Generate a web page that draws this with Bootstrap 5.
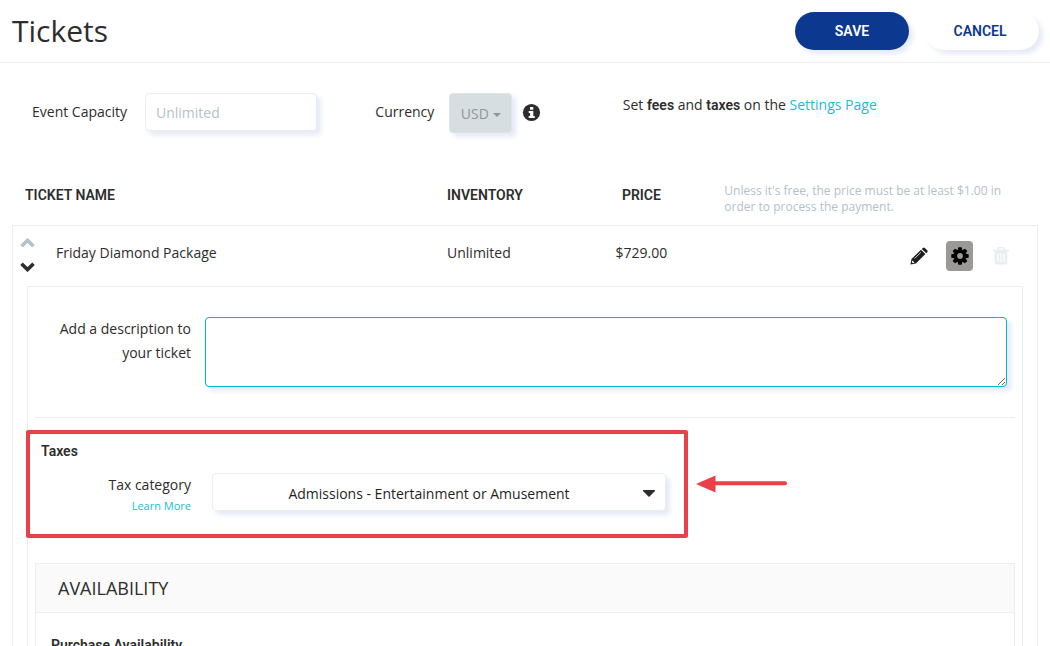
<!DOCTYPE html>
<html lang="en">
<head>
<meta charset="utf-8">
<meta name="viewport" content="width=device-width, initial-scale=1">
<title>Tickets</title>
<link href="https://cdn.jsdelivr.net/npm/bootstrap@5.3.0/dist/css/bootstrap.min.css" rel="stylesheet">
<style>
:root { --line: #ebeef0; --ink: #2d2d2d; --cyan: #1cbcdb; --navy: #0d3890; --mark-red: #e94049; --soft: 4px 4px 5px #e6eaf6; }
html { scrollbar-width: none; }
body { font: 14px/24px "Open Sans", "Noto Sans", sans-serif; color: var(--ink); background: #fff; }
b, th, .strong-text { font-family: Roboto, "Open Sans", sans-serif; font-weight: 600; }
a { color: var(--cyan); text-decoration: none; }

.page-bar { height: 63px; padding: 0 11px 0 12px; border-bottom: 1px solid var(--line); }
.page-bar h1 { font-size: 30px; line-height: 36px; font-weight: 400; }
.btn-pill { width: 114px; height: 38px; padding: 0; border: 0; border-radius: 19px; font: 600 14px/24px Roboto, sans-serif; box-shadow: var(--soft); }
.btn-save, .btn-save:hover { color: #fff; background: var(--navy); }
.btn-cancel, .btn-cancel:hover { color: var(--navy); background: #fff; padding-right: 4px; }

.options { padding: 30px 12px 0 32px; height: 120px; }
.options label { line-height: 38px; }
.options .capacity-label { width: 113px; }
.options .currency-label { width: 74px; }
.capacity-box { width: 172px; height: 38px; padding: 0 10px; font-size: 14px; border: 1px solid var(--line); border-radius: 4px; box-shadow: var(--soft); }
.capacity-box::placeholder { color: #b3c1c9; }
.btn-currency, .btn-currency:disabled { width: 63px; height: 40px; padding: 1px 0 0; font-size: 14px; color: #919694; background: #d7dee1; border: 1px solid #dfe4e6; border-radius: 4px; box-shadow: var(--soft); opacity: 1; }
.btn-currency::after { margin-left: 4px; border-width: 4px 4px 0; vertical-align: 2px; }

.ticket-wrap { padding: 0 12px; }
.ticket-table { width: 100%; table-layout: fixed; border-collapse: separate; border-spacing: 0; }
.ticket-table th, .ticket-table td { padding: 0; vertical-align: top; }
.ticket-table th:first-child { padding-left: 13px; }
.hint { font: 400 12px/16px "Open Sans", sans-serif; color: #b3c1c9; padding: 0 28px 10px !important; }
.ticket-table tbody td { border: 0 solid var(--line); }
.ticket-row td { border-top-width: 1px !important; height: 61px; padding-top: 15px !important; }
.ticket-row td:first-child { border-left-width: 1px; padding: 5px 0 0 7px !important; }
.ticket-row td:last-child { border-right-width: 1px; }
.ticket-name { padding: 10px 0 0 21px; }
.details-cell { border-width: 0 1px !important; padding: 0 14px !important; }
.icon-btn { display: flex; align-items: center; justify-content: center; padding: 0; border: 0; background: none; }
.arrow-btn { width: 15px; height: 24px; }
.tool-btn { width: 27px; height: 30px; border-radius: 4px; }
.tool-on { background: #9b9997; }
.tools { gap: 14px; padding-right: 23px; }

.details { border: 1px solid var(--line); padding: 0 7px; }
.desc { padding: 30px 8px 30px 0; border-bottom: 1px solid var(--line); }
.field-label { flex: 0 0 170px; padding-right: 14px; text-align: right; }
.desc-box { height: 70px; border: 1px solid #00b5d8; border-radius: 4px; box-shadow: var(--soft); }
.desc-box:focus { border-color: #00b5d8; box-shadow: var(--soft); }

.tax-row { margin: 12px 0 25px -9px; gap: 8px; }
.tax-callout { flex: 0 1 662px; height: 108px; position: relative; background: #fff; border: 4px solid var(--mark-red); border-radius: 2px; padding: 5px 18px 0 5px; }
.tax-callout h2 { font-size: 14px; line-height: 24px; margin: 0 0 10px 6px; }
.learn { font-size: 11px; line-height: 18px; }
.tax-select { height: 38px; padding: 3px 32px 0 12px; margin-left: 7px; font-size: 14px; text-align: center; text-align-last: center; color: #1f1f1f; border: 1px solid var(--line); border-radius: 4px; box-shadow: var(--soft);
  background: #fff url("data:image/svg+xml,%3Csvg xmlns='http://www.w3.org/2000/svg' viewBox='0 0 12 7'%3E%3Cpath d='M0 0h12v1L6 7 0 1z' fill='%232d2d2d'/%3E%3C/svg%3E") no-repeat right 10px top 16px / 12px 7px; }

.avail { border: 1px solid var(--line); min-height: 130px; }
.avail-head { height: 49px; padding: 0 22px; background: #fafafa; border-bottom: 1px solid var(--line); }
.avail-head h2 { font-size: 18px; line-height: 24px; }
.avail h3 { font-size: 14px; line-height: 24px; padding: 20px 15px; }
</style>
</head>
<body>
<header class="page-bar d-flex align-items-center justify-content-between">
  <h1 class="m-0">Tickets</h1>
  <div class="d-flex gap-3">
    <button type="button" class="btn btn-pill btn-save">SAVE</button>
    <button type="button" class="btn btn-pill btn-cancel">CANCEL</button>
  </div>
</header>

<main>
  <form class="options row g-0">
    <div class="col-4 d-flex align-items-start">
      <label for="capacity" class="capacity-label">Event Capacity</label>
      <input id="capacity" type="text" class="form-control capacity-box" placeholder="Unlimited">
    </div>
    <div class="col-3 d-flex align-items-start ps-2">
      <label for="currency" class="currency-label">Currency</label>
      <button id="currency" type="button" class="btn btn-currency dropdown-toggle" disabled>USD</button>
      <svg class="mt-2 mx-2" width="24" height="24" viewBox="0 0 24 24" role="img" aria-label="Info"><circle cx="11.500" cy="11.500" r="8.600" fill="#2d2d2d"/><path d="M10 6h3.300v2.800H10zM8.700 9.900h4.600v5h1.400V17h-6v-2.100h1.400V12H8.700z" fill="#fff"/></svg>
    </div>
    <div class="col-5 ps-1">Set <b>fees</b> and <b>taxes</b> on the <a href="#">Settings Page</a></div>
  </form>

  <div class="ticket-wrap">
    <table class="ticket-table">
      <colgroup><col style="width:42.4%"><col style="width:13.6%"><col style="width:10.7%"><col></colgroup>
      <thead>
        <tr>
          <th scope="col">TICKET NAME</th>
          <th scope="col">INVENTORY</th>
          <th scope="col" class="text-center">PRICE</th>
          <td class="hint">Unless it's free, the price must be at least $1.00 in<br>order to process the payment.</td>
        </tr>
      </thead>
      <tbody>
        <tr class="ticket-row">
          <td>
            <div class="d-flex">
              <div class="d-flex flex-column">
                <button type="button" class="icon-btn arrow-btn" aria-label="Move up"><svg width="15" height="10" viewBox="0 0 15 10"><path d="M1.500 8.200l6-5.800 6 5.800" fill="none" stroke="#b3c1c9" stroke-width="3.600"/></svg></button>
                <button type="button" class="icon-btn arrow-btn" aria-label="Move down"><svg width="15" height="10" viewBox="0 0 15 10"><path d="M1.500 1.800l6 5.800 6-5.800" fill="none" stroke="#2d2d2d" stroke-width="3.600"/></svg></button>
              </div>
              <span class="ticket-name">Friday Diamond Package</span>
            </div>
          </td>
          <td>Unlimited</td>
          <td class="text-center">$729.00</td>
          <td>
            <div class="tools d-flex justify-content-end">
              <button type="button" class="icon-btn tool-btn" aria-label="Edit"><svg width="18" height="18" viewBox="0 0 18 18" fill="#1d1d1d"><path d="M.5 17.500l1-5.500L11 2.700l4.400 4.400-9.500 9.400z"/><path d="M11.800 1.900l1-1q1-.9 2 0l2.400 2.400q.9 1 0 2l-1 1z"/><path d="M2.200 13.400l2.400 2.400-1.700.4-1.100-1.100z" fill="#fff"/><path d="M4.500 11.600l6.300-6.200M11.300 2.300l4.500 4.500" stroke="#fff" stroke-width=".8"/></svg></button>
              <button type="button" class="icon-btn tool-btn tool-on" aria-label="Settings"><svg width="18" height="18" viewBox="-9 -9 18 18"><g fill="#000"><circle r="6.500"/><g id="teeth"><path d="M-1.700-8.700h3.400l.6 3h-4.600zM-1.700 8.700h3.400l.6-3h-4.600zM-8.700-1.700v3.400l3 .6v-4.600zM8.700-1.700v3.400l-3 .6v-4.600z"/></g><use href="#teeth" transform="rotate(45)"/></g><circle r="2.900" fill="#9b9997"/></svg></button>
              <button type="button" class="icon-btn tool-btn" aria-label="Delete"><svg width="16" height="18" viewBox="0 0 16 18"><path d="M5 3V1.500q0-.7.8-.7h4.400q.8 0 .8.700V3" fill="none" stroke="#e9eef1" stroke-width="1.500"/><path d="M0 2.800h16v1.700H0zM1.700 4.500h12.600v11.200q0 1.800-1.700 1.800H3.400q-1.700 0-1.700-1.800z" fill="#e9eef1"/><path d="M5 6.500v8.500M8 6.500v8.500M11 6.500v8.500" stroke="#fff" stroke-width="1.200"/></svg></button>
            </div>
          </td>
        </tr>
        <tr>
          <td colspan="4" class="details-cell">
            <div class="details">
              <div class="desc d-flex">
                <label for="desc" class="field-label">Add a description to your ticket</label>
                <textarea id="desc" class="form-control desc-box flex-grow-1"></textarea>
              </div>
              <div class="tax-row d-flex align-items-center">
                <section class="tax-callout">
                  <h2 class="strong-text">Taxes</h2>
                  <div class="d-flex">
                    <div class="field-label"><label for="tax" class="d-block">Tax category</label><a href="#" class="d-block learn">Learn More</a></div>
                    <select id="tax" class="form-select tax-select"><option>Admissions - Entertainment or Amusement</option></select>
                  </div>
                </section>
                <svg width="91" height="18" viewBox="0 0 91 18" aria-hidden="true"><path d="M0 9L19.500.5v17z" fill="#e94049"/><path d="M18 8.200H89" stroke="#e94049" stroke-width="4" stroke-linecap="round"/></svg>
              </div>
              <section class="avail">
                <div class="avail-head d-flex align-items-center"><h2 class="m-0 fw-normal">AVAILABILITY</h2></div>
                <h3 class="strong-text m-0">Purchase Availability</h3>
              </section>
            </div>
          </td>
        </tr>
      </tbody>
    </table>
  </div>
</main>
<script src="https://cdn.jsdelivr.net/npm/bootstrap@5.3.0/dist/js/bootstrap.bundle.min.js"></script>
</body>
</html>
